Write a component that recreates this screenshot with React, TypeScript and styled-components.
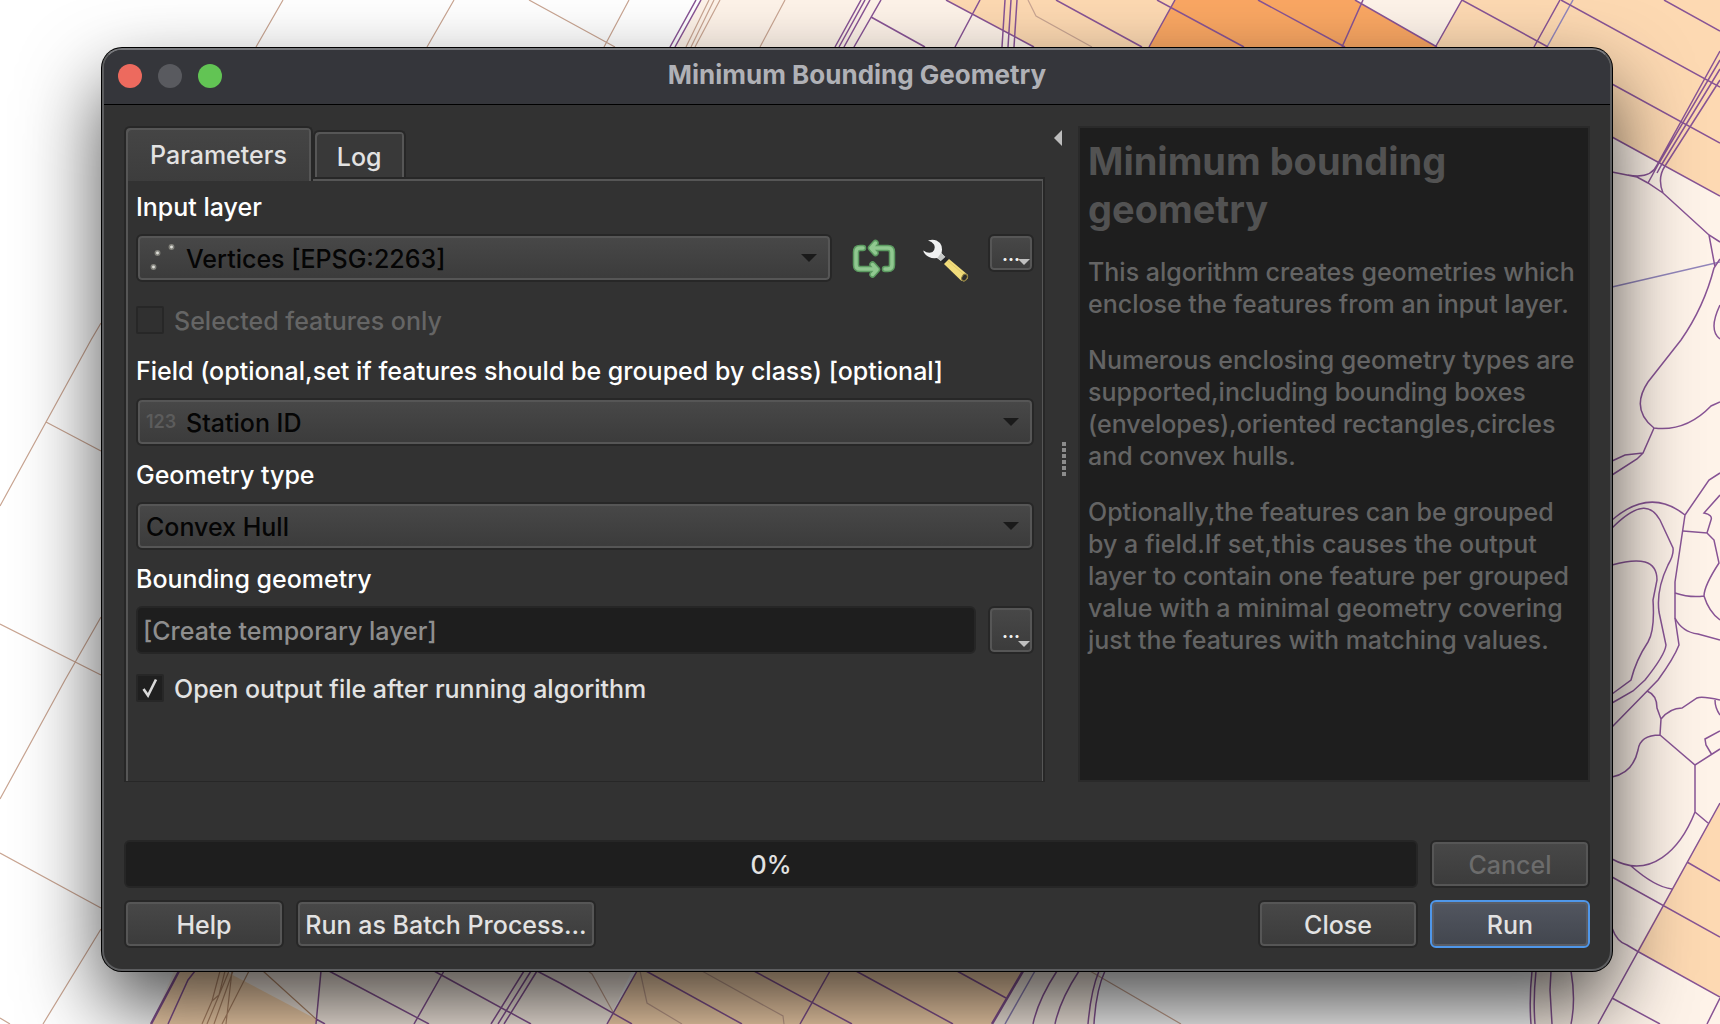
import React, { useState } from "react";
import styled, { createGlobalStyle, css } from "styled-components";

const GlobalStyle = createGlobalStyle`
  *, *::before, *::after { box-sizing: border-box; }
  body {
    margin: 0;
    background: #ffffff;
    color: #e2e2e2;
    font-family: Inter, "Liberation Sans", sans-serif;
    font-size: 25px;
    font-weight: 500;
    line-height: 32px;
  }
  button, input, select { font: inherit; color: inherit; margin: 0; }
`;

const bevel = css`
  border: 2px solid #272727;
  border-radius: 6px;
  background: linear-gradient(#484848, #3b3b3b);
  box-shadow: inset 0 0 0 2px #565656;
`;

/* ---------- page ---------- */

const Desktop = styled.main`
  position: relative;
  min-height: 100vh;
  padding: 48px 108px 53px 102px;
  overflow: hidden;
`;

const MapCanvas = styled.svg`
  position: absolute;
  inset: 0;
  width: 100%;
  height: 100%;
`;

const Dialog = styled.section`
  position: relative;
  border: 2px solid #5c5d5f;
  border-top-color: #77787c;
  border-radius: 20px;
  background: #323232;
  box-shadow: 0 0 0 1px #000, 0 36px 80px rgba(0, 0, 0, 0.7);
  overflow: hidden;
`;

const TitleBar = styled.header`
  display: grid;
  grid-template-columns: 1fr auto 1fr;
  align-items: center;
  height: 55px;
  padding: 0 14px 2px;
  background: #35363b;
  border-bottom: 1px solid #000;
`;

const Lights = styled.div`
  display: flex;
  gap: 16px;
`;

const Light = styled.button<{ $color: string }>`
  width: 24px;
  height: 24px;
  padding: 0;
  border: 0;
  border-radius: 50%;
  background: ${(p) => p.$color};
`;

const Title = styled.h1`
  margin: 0 0 2px;
  font-size: 26px;
  line-height: 32px;
  font-weight: 700;
  color: #b0b1b6;
`;

const Body = styled.div`
  padding: 21px 20px;
`;

const Columns = styled.div`
  display: grid;
  grid-template-columns: minmax(0, 1fr) 33px 512px;
  margin-bottom: 58px;
`;

/* ---------- tabs ---------- */

const TabList = styled.div`
  display: flex;
  align-items: flex-end;
  height: 51px;
`;

const Tab = styled.button<{ $active?: boolean }>`
  position: relative;
  z-index: ${(p) => (p.$active ? 1 : 0)};
  height: ${(p) => (p.$active ? 55 : 47)}px;
  margin-bottom: ${(p) => (p.$active ? -4 : 0)}px;
  padding: ${(p) => (p.$active ? "0 24px" : "4px 22px 0")};
  border: 2px solid #272727;
  border-bottom: 0;
  border-radius: 6px 6px 0 0;
  background: ${(p) => (p.$active ? "linear-gradient(#454545, #3d3d3d)" : "#393939")};
  box-shadow: inset 2px 2px 0 #565656, inset -2px 0 0 #565656;
`;

const TabPage = styled.form`
  display: flex;
  flex-direction: column;
  gap: 12px;
  padding: 11px 9px 79px 10px;
  border: 2px solid #272727;
  border-bottom-width: 1px;
  box-shadow: inset 2px 2px 0 #565656, inset -1px 0 0 #565656;
`;

/* ---------- form parts ---------- */

const Field = styled.div`
  display: flex;
  flex-direction: column;
  gap: 10px;
`;

const Label = styled.label`
  line-height: 34px;
  color: #ffffff;
`;

const Row = styled.div`
  display: flex;
  align-items: flex-start;
  gap: 12px;
`;

const Combo = styled.div`
  ${bevel}
  display: flex;
  flex: 1;
  align-items: center;
  gap: 8px;
  height: 48px;
  padding: 0 13px 0 8px;
  color: #050505;
`;

const Select = styled.select`
  flex: 1;
  min-width: 0;
  height: 38px;
  padding: 2px 0 0;
  border: 0;
  outline: 0;
  appearance: none;
  background: transparent;
`;

const TypeTag = styled.span`
  width: 32px;
  font-size: 18px;
  font-weight: 600;
  color: #5c5c5c;
`;

const IconButton = styled.button`
  display: flex;
  padding: 0;
  border: 0;
  background: none;
`;

const Tools = styled.div`
  display: flex;
  gap: 27px;
  padding: 5px 7px 0 8px;
`;

const MoreButton = styled.button<{ $compact?: boolean }>`
  ${bevel}
  position: relative;
  width: 46px;
  height: ${(p) => (p.$compact ? 38 : 48)}px;
  padding: 4px 0 0;
  font-size: 18px;
  font-weight: 700;
  line-height: 24px;
  color: #f0f0f0;
`;

const MenuMark = styled.svg`
  position: absolute;
  right: 2px;
  bottom: 5px;
`;

const TextInput = styled.input`
  flex: 1;
  min-width: 0;
  height: 48px;
  padding: 2px 5px 0;
  border: 2px solid #262626;
  border-radius: 6px;
  background: #1e1e1e;
  outline: 0;
  &::placeholder { color: #8e8e8e; opacity: 1; }
`;

const CheckLabel = styled.label<{ $muted?: boolean }>`
  display: flex;
  align-items: center;
  gap: 10px;
  height: 28px;
  margin: ${(p) => (p.$muted ? "12px 0 8px" : "8px 0 0")};
  line-height: 34px;
  color: ${(p) => (p.$muted ? "#656565" : "#e2e2e2")};
`;

const CheckText = styled.span`
  padding-top: 2px;
`;

const CheckBox = styled.span`
  display: grid;
  place-items: center;
  > * { grid-area: 1 / 1; }
  > svg { pointer-events: none; }
`;

const CheckInput = styled.input`
  width: 28px;
  height: 28px;
  appearance: none;
  border: 2px solid #272727;
  border-radius: 2px;
  background: #1f1f1f;
  &:disabled { background: #303030; }
`;

/* ---------- splitter and help ---------- */

const Splitter = styled.div`
  display: flex;
  flex-direction: column;
  align-items: center;
  padding: 4px 0 10px;
`;

const Collapse = styled.button`
  align-self: flex-start;
  display: flex;
  padding: 0 0 0 9px;
  border: 0;
  background: none;
`;

const Grip = styled.div`
  display: flex;
  flex: 1;
  flex-direction: column;
  justify-content: center;
  gap: 2px;
  padding-left: 4px;
`;

const GripDot = styled.i`
  width: 4px;
  height: 4px;
  background: #8c8c8c;
`;

const HelpPanel = styled.article`
  padding: 9px 4px 9px 8px;
  border: 2px solid #2a2a2a;
  background: #1e1e1e;
  color: #646464;
`;

const HelpTitle = styled.h2`
  margin: 0 0 23px;
  font-size: 38px;
  line-height: 48px;
  font-weight: 700;
  color: #525252;
`;

const HelpText = styled.p`
  margin: 0 0 24px;
`;

/* ---------- footer ---------- */

const Footer = styled.footer`
  display: flex;
  flex-direction: column;
  gap: 12px;
`;

const Progress = styled.div`
  flex: 1;
  height: 48px;
  border: 2px solid #262626;
  border-radius: 6px;
  background: #1e1e1e;
  line-height: 46px;
  text-align: center;
`;

const PushButton = styled.button<{ $wide?: boolean; $primary?: boolean }>`
  ${bevel}
  width: ${(p) => (p.$wide ? 300 : 160)}px;
  height: 48px;
  padding: 2px 0 0;
  white-space: nowrap;
  &:disabled { color: #6c6c6c; }
  ${(p) =>
    p.$primary &&
    css`
      border-color: #4f97ea;
      background: linear-gradient(#525660, #42464e);
      box-shadow: inset 0 0 0 2px #5b5e66;
    `}
`;

const Spacer = styled.div`
  flex: 1;
`;

/* ---------- drawings ---------- */

const Arrow = () => (
  <svg width="16" height="8" viewBox="0 0 16 8" aria-hidden="true">
    <path d="M0 0H16L8 8Z" fill="#1a1a1a" />
  </svg>
);

const PointsIcon = () => (
  <svg width="32" height="32" viewBox="0 0 32 32" aria-hidden="true">
    <g fill="#deded8" stroke="#80807a" strokeWidth="1.500">
      <circle cx="7.500" cy="25" r="2.200" />
      <circle cx="11.500" cy="11" r="2.200" />
      <circle cx="25.500" cy="5" r="2.200" />
    </g>
  </svg>
);

const iteratePath =
  "M11 9H8Q4 9 4 13V26Q4 30 8 30H24M20.500 25.500L25 30.500L20.500 35.500M33 30H36Q40 30 40 26V13Q40 9 36 9H20M23.500 4L19 9L23.500 14";

const IterateIcon = () => (
  <svg width="44" height="39" viewBox="0 0 44 39" fill="none" aria-hidden="true">
    <path d={iteratePath} stroke="#5b9a60" strokeWidth="6.500" strokeLinejoin="round" strokeLinecap="round" />
    <path d={iteratePath} stroke="#90c890" strokeWidth="3.500" strokeLinejoin="round" strokeLinecap="round" />
  </svg>
);

const WrenchIcon = () => (
  <svg width="46" height="43" viewBox="0 0 46 43" aria-hidden="true">
    <path
      d="M5 1.500Q12-1 17 4Q20 8 18.500 14L22 18L18 22L14 19Q6 20 2 15Q0 13 .5 11.500Q5 15 9.500 13Q13 10 11 5.500Q9 2.500 5 1.500Z"
      fill="#f0f1f1"
    />
    <path d="M18 14L22.500 18L18 22L14.500 19Z" fill="#c4c6c4" />
    <path d="M22.500 18L26 20.500L21.500 25L18 22Z" fill="#26272a" />
    <path d="M26 20L45 36Q46 40 41 42.500L38 41.500L21 25Z" fill="#f1dc7b" />
    <path d="M25 22L44 38" stroke="#e3cb69" strokeWidth="1" />
    <ellipse cx="41.500" cy="38.500" rx="2.500" ry="3.500" transform="rotate(30 41.500 38.500)" fill="#2c2c2c" stroke="#8a7a3c" />
  </svg>
);

const DownMark = () => (
  <MenuMark width="12" height="6" viewBox="0 0 12 6" aria-hidden="true">
    <path d="M0 0H12L6 6Z" fill="#c0c0c0" />
  </MenuMark>
);

const CheckMark = () => (
  <svg width="20" height="20" viewBox="0 0 20 20" fill="none" aria-hidden="true">
    <path d="M3.500 11L8 17.500L16 1.500" stroke="#d8d8d8" strokeWidth="2.600" />
  </svg>
);

const ParcelMap = () => (
  <MapCanvas viewBox="0 0 1720 1024" preserveAspectRatio="xMidYMid slice" aria-hidden="true">
    <g fill="#fef3e9">
      <path d="M701 0H1720V1024H1531Q1529 1000 1532 960L1400 500L675 47Z" />
      <path d="M179 960H637L607 1024H151ZM1023 960H1105Q1094 990 1094 1024H992Z" />
    </g>
    <g fill="#fdd9b2">
      <path d="M946 0H1175L1149 60H1034V47Z" />
      <path d="M1462 0H1720V196L1612 137L1436 60V46Z" />
      <path d="M179 971H225L316 1019V1024H151ZM637 971H1023L992 1024H607Z" />
      <path d="M1720 803L1637 951L1720 997Z" />
    </g>
    <path d="M1175 0H1355L1437 47V60H1143L1149 47Z" fill="#faa763" />
    <g fill="none" stroke="#c9a592" strokeWidth="1.200">
      <path d="M283 0L256 47M454 0L427 47M529 0L615 47M629 0L604 47M101 323L91 340L0 506M46 422L101 451M0 624L101 675M101 617L65 680L0 799M0 853L101 908M101 929L43 1024M0 1018L10 1024" />
      <path d="M709 0L686 47M714 0L691 47M720 0L695 47M785 0L760 47M1028 0L1036 16L1092 47" />
      <path d="M588 971L592 974L613 1012M640 971L647 1003L682 1024M702 971L783 1016L784 1024M1090 971L1181 1024" />
      <path d="M220 971L212 1001L202 1024M225 971L219 995L212 1001M229 971L207 1024M233 971L214 1024M232 971L226 1024M249 971L222 1024M263 971L316 1019" stroke="#b98d6c" />
    </g>
    <g fill="none" stroke="#9285ba" strokeWidth="1.500">
      <path d="M1573 0L1547 47M1612 287L1720 262M1035 971L1005 1024" />
    </g>
    <g fill="none" stroke="#885495" strokeWidth="1.500">
      <path d="M696 0L670 47M701 0L675 47M861 0L835 47M865 0L839 47M870 0L844 47M881 0L854 47M871 17L925 47M946 0L1034 47M980 0L955 47M1005 0L1002 47M1011 0L1008 47M1017 0L1014 47M1056 0L1142 47" />
      <path d="M1157 0L1244 47M1175 0L1149 47M1355 0L1437 47M1258 0L1345 47M1363 0L1342 47M1462 0L1436 46M1462 0L1548 47M1560 0L1534 47M1561 0L1720 87M1664 0L1720 31M1612 84L1720 143M1612 137L1720 196" />
      <path d="M1720 51L1657 165Q1651 179 1628 175M1720 60L1659 163L1648 183M1720 69L1662 164L1657 173M1720 80L1665 166Q1657 178 1663 193M1612 172L1637 177L1648 183L1663 193L1709 235L1720 242M1709 235L1715 267M1720 259L1714 268Q1704 307 1681 340L1648 382Q1630 409 1654 428Q1686 432 1711 406L1720 402M1720 305Q1708 330 1720 339" />
      <path d="M1654 428L1643 453L1637 459L1612 475M1643 453L1625 455L1612 461M1720 473L1709 480L1685 515L1675 582V618L1679 645Q1674 658 1658 680L1612 727M1612 520Q1650 487 1685 515M1612 528C1640 500 1652 506 1660 520Q1666 533 1673 548Q1674 555 1668 565Q1656 590 1659 612L1666 645Q1665 655 1645 680L1633 691L1612 703M1612 565C1640 557 1657 560 1657 580L1653 600Q1655 630 1648 642Q1636 660 1631 680L1612 694" />
      <path d="M1720 495L1704 513Q1713 515 1711 520L1707 533L1683 531M1707 533L1714 540L1719 563Q1704 586 1704 596Q1709 612 1720 620M1675 593Q1690 598 1704 596M1675 618Q1682 632 1698 634L1720 640" />
      <path d="M1647 691Q1657 695 1657 708L1661 719L1660 735M1661 719Q1670 708 1682 708L1697 698Q1702 696 1720 700M1715 700Q1715 708 1720 715M1660 735Q1640 735 1638 750Q1633 773 1612 777M1660 735L1695 765L1720 749M1720 731L1705 739L1706 745L1712 755M1695 765V812L1708 823M1695 812C1680 850 1650 880 1612 859M1631 866Q1655 887 1672 889M1612 877L1720 937M1720 803L1598 1024M1687 862L1720 881M1612 928Q1617 942 1627 945L1637 951L1720 997M1612 998L1660 1024M1720 998L1707 1024" />
      <path d="M1532 971Q1529 1000 1531 1024M1536 971Q1533 1000 1535 1024M1551 971L1550 990L1552 1024M1571 971Q1576 1000 1571 1024" />
      <path d="M560 983L632 1024M637 971L607 1024M646 971L742 1024M754 971L852 1024M830 971L800 1024M856 971L953 1024M957 971L1006 998M1057 971Q1038 1000 1033 1024M1079 971Q1060 1000 1055 1024M1099 971Q1091 990 1088 1024M1105 971Q1096 990 1094 1024" />
      <path d="M195 971L188 980L168 1024M321 971L316 1024M316 1019L325 1024M329 971L429 1024M444 971L414 1024M434 971L531 1024M524 971L491 1024M531 971L498 1024M537 971L504 1024M537 971L560 983" />
      <path d="M179 971L151 1024M1023 971L992 1024" strokeWidth="2.500" />
    </g>
  </MapCanvas>
);

/* ---------- app ---------- */

export default function App() {
  const [open, setOpen] = useState(true);
  return (
    <>
      <GlobalStyle />
      <Desktop>
        <ParcelMap />
        <Dialog aria-labelledby="dialog-title">
          <TitleBar>
            <Lights>
              <Light $color="#ed6a5e" aria-label="Close window" />
              <Light $color="#595a5f" aria-label="Minimize window" />
              <Light $color="#62c454" aria-label="Zoom window" />
            </Lights>
            <Title id="dialog-title">Minimum Bounding Geometry</Title>
          </TitleBar>
          <Body>
            <Columns>
              <div>
                <TabList role="tablist">
                  <Tab role="tab" aria-selected="true" $active>Parameters</Tab>
                  <Tab role="tab" aria-selected="false">Log</Tab>
                </TabList>
                <TabPage onSubmit={(e) => e.preventDefault()}>
                  <Field>
                    <Label htmlFor="layer">Input layer</Label>
                    <Row>
                      <Combo>
                        <PointsIcon />
                        <Select id="layer"><option>Vertices [EPSG:2263]</option></Select>
                        <Arrow />
                      </Combo>
                      <Tools>
                        <IconButton type="button" aria-label="Iterate over this layer"><IterateIcon /></IconButton>
                        <IconButton type="button" aria-label="Advanced options"><WrenchIcon /></IconButton>
                      </Tools>
                      <MoreButton type="button" $compact>...<DownMark /></MoreButton>
                    </Row>
                  </Field>
                  <CheckLabel $muted>
                    <CheckBox><CheckInput type="checkbox" disabled /></CheckBox>
                    <CheckText>Selected features only</CheckText>
                  </CheckLabel>
                  <Field>
                    <Label htmlFor="group">Field (optional,set if features should be grouped by class) [optional]</Label>
                    <Row>
                      <Combo>
                        <TypeTag>123</TypeTag>
                        <Select id="group"><option>Station ID</option></Select>
                        <Arrow />
                      </Combo>
                    </Row>
                  </Field>
                  <Field>
                    <Label htmlFor="type">Geometry type</Label>
                    <Row>
                      <Combo>
                        <Select id="type"><option>Convex Hull</option></Select>
                        <Arrow />
                      </Combo>
                    </Row>
                  </Field>
                  <Field>
                    <Label htmlFor="output">Bounding geometry</Label>
                    <Row>
                      <TextInput id="output" placeholder="[Create temporary layer]" />
                      <MoreButton type="button">...<DownMark /></MoreButton>
                    </Row>
                  </Field>
                  <CheckLabel>
                    <CheckBox>
                      <CheckInput type="checkbox" checked={open} onChange={() => setOpen(!open)} />
                      {open && <CheckMark />}
                    </CheckBox>
                    <CheckText>Open output file after running algorithm</CheckText>
                  </CheckLabel>
                </TabPage>
              </div>
              <Splitter>
                <Collapse aria-label="Collapse help">
                  <svg width="8" height="16" viewBox="0 0 8 16" aria-hidden="true">
                    <path d="M8 0V16L0 8Z" fill="#bdbdbd" />
                  </svg>
                </Collapse>
                <Grip>
                  {[0, 1, 2, 3, 4, 5].map((n) => <GripDot key={n} />)}
                </Grip>
              </Splitter>
              <HelpPanel>
                <HelpTitle>Minimum bounding geometry</HelpTitle>
                <HelpText>This algorithm creates geometries which enclose the features from an input layer.</HelpText>
                <HelpText>
                  Numerous enclosing geometry types are supported,including bounding boxes
                  (envelopes),oriented rectangles,circles and convex hulls.
                </HelpText>
                <HelpText>
                  Optionally,the features can be grouped by a field.If set,this causes the output layer to
                  contain one feature per grouped value with a minimal geometry covering just the features
                  with matching values.
                </HelpText>
              </HelpPanel>
            </Columns>
            <Footer>
              <Row>
                <Progress role="progressbar" aria-valuenow={0} aria-valuemin={0} aria-valuemax={100}>0%</Progress>
                <PushButton disabled>Cancel</PushButton>
              </Row>
              <Row>
                <PushButton>Help</PushButton>
                <PushButton $wide>Run as Batch Process...</PushButton>
                <Spacer />
                <PushButton>Close</PushButton>
                <PushButton $primary>Run</PushButton>
              </Row>
            </Footer>
          </Body>
        </Dialog>
      </Desktop>
    </>
  );
}
